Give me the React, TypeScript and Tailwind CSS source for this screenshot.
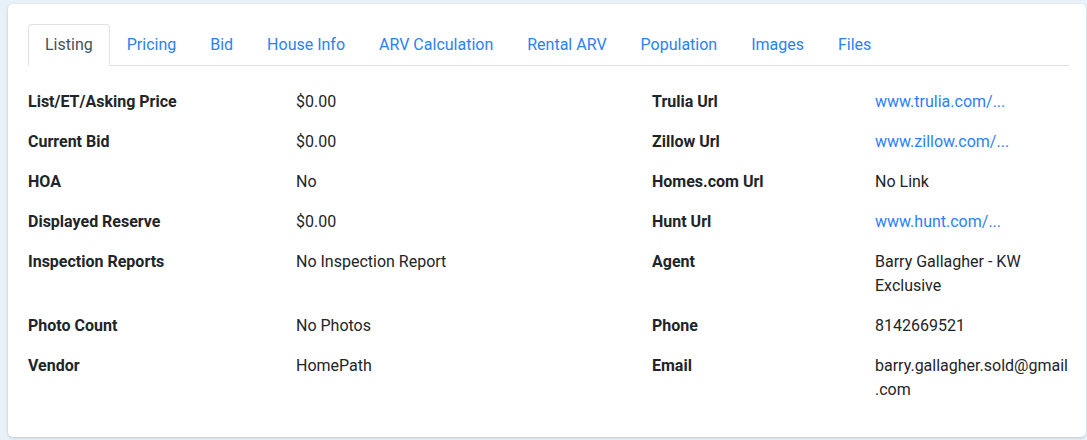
import { useState } from 'react';

const tabs = ['Listing', 'Pricing', 'Bid', 'House Info', 'ARV Calculation', 'Rental ARV', 'Population', 'Images', 'Files'];

interface Field {
  label: string;
  value: string;
  link?: boolean;
}

const rows: [Field, Field][] = [
  [{ label: 'List/ET/Asking Price', value: '$0.00' }, { label: 'Trulia Url', value: 'www.trulia.com/...', link: true }],
  [{ label: 'Current Bid', value: '$0.00' }, { label: 'Zillow Url', value: 'www.zillow.com/...', link: true }],
  [{ label: 'HOA', value: 'No' }, { label: 'Homes.com Url', value: 'No Link' }],
  [{ label: 'Displayed Reserve', value: '$0.00' }, { label: 'Hunt Url', value: 'www.hunt.com/...', link: true }],
  [{ label: 'Inspection Reports', value: 'No Inspection Report' }, { label: 'Agent', value: 'Barry Gallagher - KW Exclusive' }],
  [{ label: 'Photo Count', value: 'No Photos' }, { label: 'Phone', value: '8142669521' }],
  [{ label: 'Vendor', value: 'HomePath' }, { label: 'Email', value: 'barry.gallagher.sold@gmail.com' }],
];

function Value({ field }: { field: Field }) {
  if (field.link) {
    return <a href="#" className="text-[#2b7ff8] break-words">{field.value}</a>;
  }
  return <span className="text-[#212529] break-words">{field.value}</span>;
}

export default function App() {
  const [active, setActive] = useState('Listing');

  return (
    <div className="min-h-screen bg-[#e8f0f8] pl-2 pr-px pt-1 text-[16px] leading-6 text-[#212529]" style={{ fontFamily: 'Roboto, "Liberation Sans", sans-serif' }}>
      <div className="bg-white rounded-[5px] shadow-[0_1px_3px_rgba(0,0,0,0.18)] h-[433px] pl-5 pr-[17px] pt-5">
        <ul className="flex border-b border-[#dee2e6]">
          {tabs.map((t) => (
            <li key={t} className="-mb-px">
              <button
                onClick={() => setActive(t)}
                className={
                  t === active
                    ? 'block px-4 py-2 border border-[#dee2e6] border-b-white rounded-t-[4px] bg-white text-[#495057]'
                    : 'block px-4 py-2 border border-transparent text-[#2b7ff8]'
                }
              >
                {t}
              </button>
            </li>
          ))}
        </ul>

        <div className="mt-6 grid grid-cols-[268px_356px_223px_1fr]">
          {rows.map(([a, b]) => (
            <div key={a.label} className="contents">
              <div className="font-bold mb-4">{a.label}</div>
              <div className="mb-4"><Value field={a} /></div>
              <div className="font-bold mb-4">{b.label}</div>
              <div className="mb-4 min-w-0"><Value field={b} /></div>
            </div>
          ))}
        </div>
      </div>
    </div>
  );
}
